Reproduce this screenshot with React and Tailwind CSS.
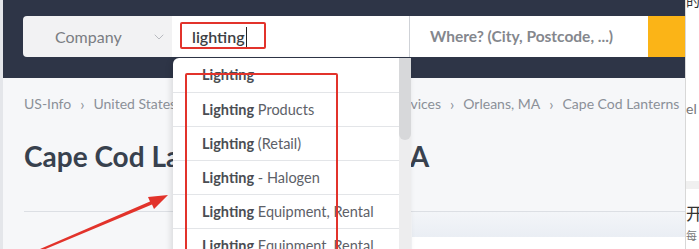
import { ChevronDown } from "lucide-react";

const items = [
  ["Lighting", ""],
  ["Lighting", " Products"],
  ["Lighting", " (Retail)"],
  ["Lighting", " - Halogen"],
  ["Lighting", " Equipment, Rental"],
  ["Lighting", " Equipment, Rental"],
];

const crumbs = ["US-Info", "United States", "Massachusetts", "Gas Lighting Services", "Orleans, MA", "Cape Cod Lanterns"];

const App = () => {
  return (
    <div className="relative flex h-[249px] w-[699px] overflow-hidden bg-white font-['Lato',sans-serif]">
      {/* main page */}
      <div className="relative w-[685px] shrink-0 overflow-hidden border-l-[3px] border-[#e4e6ea] bg-[#f6f7f9]">
        <header className="h-[78px] bg-[#2e3547] pl-[20px] pt-[16px]">
          <div className="flex h-[41px]">
            <div className="flex w-[149px] items-center justify-between rounded-l-[4px] bg-[#f2f2f3] pl-[32px] pr-[5px] text-[16px] text-[#7a7d82]">
              <span>Company</span>
              <ChevronDown size={16} strokeWidth={1.2} className="text-[#a9acb2]" />
            </div>
            <div className="flex w-[237px] items-center bg-white pl-[20px] text-[16px] font-semibold text-[#3d3f44]">
              <span>lighting</span>
              <span className="ml-px h-[20px] w-px bg-[#222]" />
            </div>
            <div className="flex w-[239px] items-center border-l border-[#cfd2d7] bg-white pl-[20px] text-[15.5px] font-bold text-[#84878d]">
              Where? (City, Postcode, ...)
            </div>
            <div className="w-[37px] bg-[#fbb417]" />
          </div>
        </header>

        <div className="pl-[21px]">
          <div className="mt-[16px] flex items-center gap-[9px] whitespace-nowrap text-[14px] leading-[20px] text-[#8b9098]">
            {crumbs.map((c, i) => (
              <span key={i} className="flex items-center gap-[9px]">
                {i > 0 && <span className="text-[15px]">›</span>}
                <span>{c}</span>
              </span>
            ))}
          </div>
          <h1 className="mt-[25px] whitespace-nowrap text-[28px] font-bold leading-[34px] text-[#38414e]">
            Cape Cod Lanterns, Orleans, MA
          </h1>
          <div className="mt-[38px] h-px bg-[#dcdfe4]" />
          <div className="flex">
            <div className="w-[388px] shrink-0" />
            <div className="flex-1">
              <div className="h-[25px] bg-gradient-to-b from-[#f3f5f8] to-[#eaeef4]" />
              <div className="h-[20px] bg-white" />
            </div>
          </div>
        </div>

        {/* autocomplete dropdown */}
        <div className="absolute left-[170px] top-[58px] flex h-[200px] w-[238px] overflow-hidden rounded-tl-[6px] bg-white shadow-[-2px_2px_6px_rgba(0,0,0,0.12)]">
          <div className="flex-1">
            {items.map(([bold, rest], i) => (
              <div
                key={i}
                className={`flex items-center border-b border-[#e3e5e8] pl-[29px] text-[14.5px] text-[#5d6168] ${
                  i === 0 ? "h-[35px]" : "h-[34px]"
                }`}
              >
                <span className="font-bold text-[#4a4d53]">{bold}</span>
                <span className="whitespace-pre">{rest}</span>
              </div>
            ))}
          </div>
          <div className="w-[12px] bg-[#ededee]">
            <div className="h-[82px] rounded-b-[6px] bg-[#d7d8da]" />
          </div>
        </div>
      </div>

      {/* neighbouring window */}
      <div className="flex-1 overflow-hidden border-l border-[#d8d8d8] bg-white text-[#333]">
        <div className="-mt-[8px] text-[14px] leading-[16px] font-['Noto_Sans_CJK_SC',sans-serif]">的</div>
        <div className="mt-[90px] text-[14px] text-[#777]">el</div>
        <div className="mt-[62px] h-[8px] bg-[#f0f0f0]" />
        <div className="mt-[14px] text-[17px] leading-[20px] font-['Noto_Sans_CJK_SC',sans-serif]">开</div>
        <div className="mt-[4px] text-[11px] text-[#777] font-['Noto_Sans_CJK_SC',sans-serif]">每</div>
      </div>

      {/* red annotations */}
      <div className="absolute left-[180px] top-[22px] h-[27px] w-[86px] rounded-[2px] border-2 border-[#e2332b]" />
      <div className="absolute left-[185px] top-[73px] h-[200px] w-[153px] rounded-[2px] border-[2.5px] border-[#e2332b]" />
      <svg className="absolute left-0 top-0" width="699" height="249" viewBox="0 0 699 249">
        <polygon points="40,249 150,201.5 148,197 168,195 154,209 152,204.5 42,250.5" fill="#e2332b" />
      </svg>
    </div>
  );
};

export default App;
